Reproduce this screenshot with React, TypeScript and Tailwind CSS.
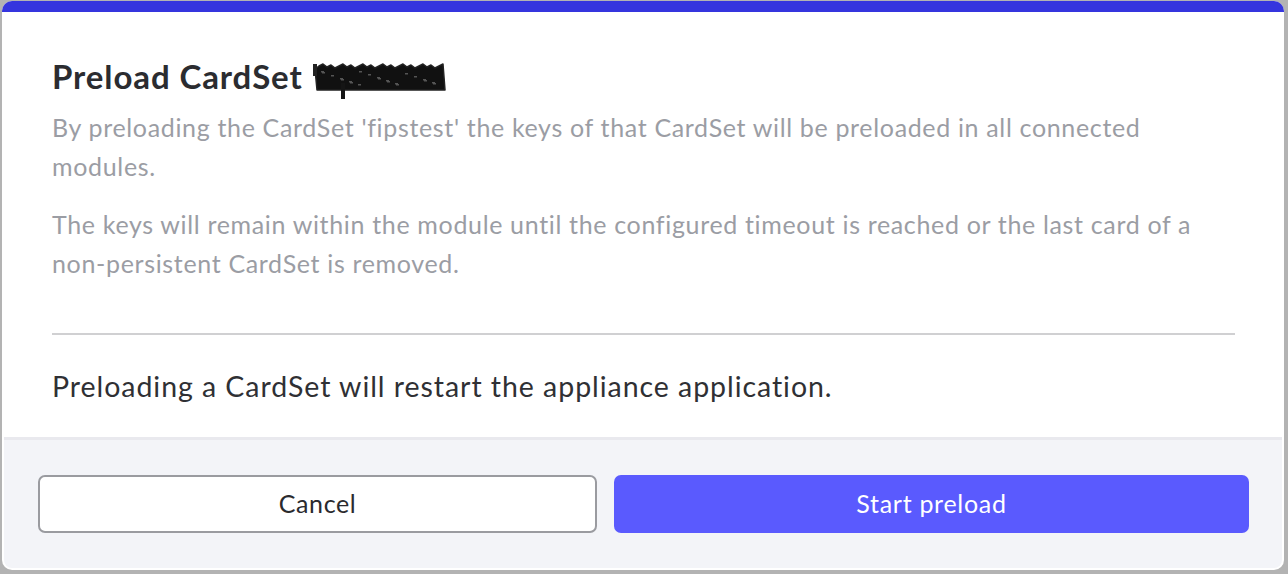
import React from "react";

function Scribble() {
  // jagged black blob covering redacted text
  let top = "M 2 8";
  for (let x = 6; x <= 132; x += 4) {
    top += ` L ${x} ${((x * 7) % 5) + 3}`;
  }
  let bottom = "";
  for (let x = 132; x >= 2; x -= 4) {
    bottom += ` L ${x} ${29 + ((x * 3) % 4)}`;
  }
  const blob = top + bottom + " Z";
  const specks: { x: number; y: number }[] = [];
  for (let i = 0; i < 22; i++) {
    specks.push({ x: 8 + ((i * 37) % 120), y: 10 + ((i * 13) % 14) });
  }
  return (
    <svg width="136" height="40" viewBox="0 0 136 40" className="shrink-0 mt-[10px]">
      <path d={blob} fill="#111" stroke="#222" strokeWidth="1.5" strokeLinejoin="round" />
      <rect x="0" y="3" width="4" height="12" fill="#222" />
      <rect x="28" y="22" width="4" height="16" fill="#151515" />
      {specks.map((s, i) => (
        <rect key={i} x={s.x} y={s.y} width="3" height="1.5" fill="#555" />
      ))}
    </svg>
  );
}

export default function App() {
  return (
    <div
      className="w-[1288px] h-[574px] bg-[#b3b3b3] flex pl-[2px] pt-[1px] overflow-hidden"
      style={{ fontFamily: "Lato, 'Noto Sans', sans-serif" }}
    >
      <div className="w-[1282px] h-[569px] bg-white rounded-[10px] overflow-hidden flex flex-col shrink-0">
        <div className="h-[11px] bg-[#3535de] shrink-0" />
        <div className="flex-1 px-[50px] pt-[45px]">
          <div className="flex items-center gap-[10px] h-[38px]">
            <h1 className="text-[33px] tracking-[0.9px] font-bold text-[#2b2c30] leading-none">Preload CardSet</h1>
            <Scribble />
          </div>
          <p className="mt-[13px] text-[25px] tracking-[0.66px] leading-[38.5px] text-[#9b9da4] whitespace-nowrap">
            By preloading the CardSet 'fipstest' the keys of that CardSet will be preloaded in all connected
            <br />
            modules.
          </p>
          <p className="mt-[20px] text-[25px] tracking-[0.66px] leading-[38.5px] text-[#9b9da4] whitespace-nowrap">
            The keys will remain within the module until the configured timeout is reached or the last card of a
            <br />
            non-persistent CardSet is removed.
          </p>
          <div className="mt-[51px] h-[2px] bg-[#d0d0d2] w-[1183px]" />
          <p className="mt-[32px] text-[28.5px] tracking-[0.95px] leading-[38px] text-[#2f3034] whitespace-nowrap">
            Preloading a CardSet will restart the appliance application.
          </p>
        </div>
        <div className="h-[131px] shrink-0 bg-[#f3f4f8] border-t-[3px] border-[#e9e9ee] mx-[2px] mb-[2px] rounded-b-[8px] flex items-start gap-[17px] pl-[34px] pr-[33px] pt-[35px]">
          <button className="w-[559px] h-[58px] rounded-[7px] border-2 border-[#9a9ba0] bg-white text-[25px] tracking-[0.6px] text-[#2a2a2e]">
            Cancel
          </button>
          <button className="flex-1 h-[58px] rounded-[7px] bg-[#5a5afe] text-[25px] tracking-[0.7px] text-white">
            Start preload
          </button>
        </div>
      </div>
    </div>
  );
}
